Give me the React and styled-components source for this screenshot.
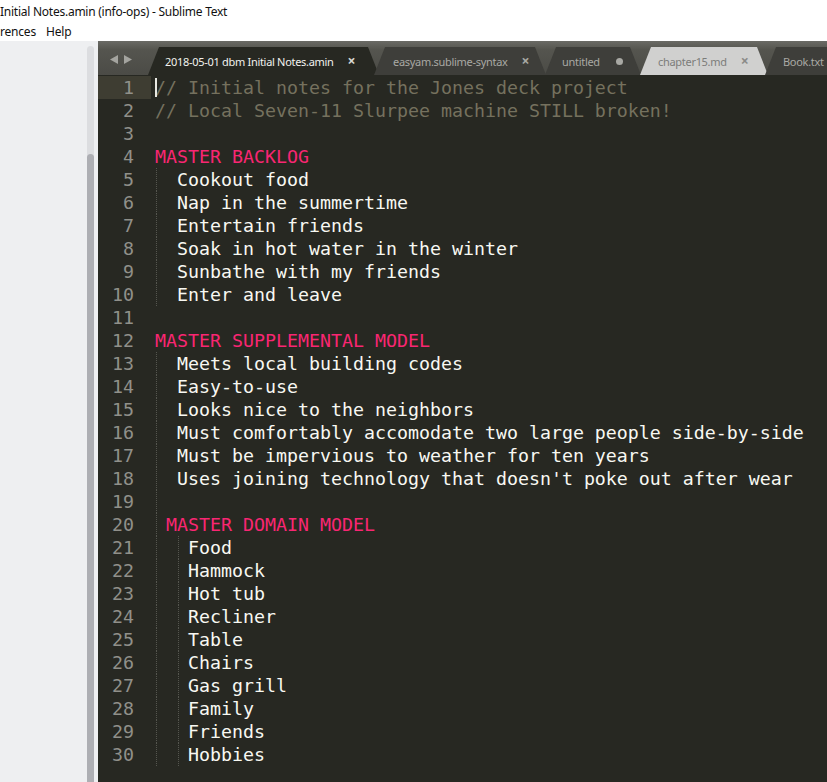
import styled, { createGlobalStyle } from 'styled-components'

const GlobalStyle = createGlobalStyle`
  html, body { margin: 0; padding: 0; background: #ffffff; overflow: hidden; }
`

const Window = styled.div`
  width: 827px;
  height: 782px;
  display: flex;
  flex-direction: column;
  overflow: hidden;
  font-family: "Noto Sans", "Open Sans", sans-serif;
`

const TitleBar = styled.div`
  height: 22px;
  display: flex;
  align-items: center;
  font-size: 12px;
  letter-spacing: -0.25px;
  color: #111;
  white-space: nowrap;
`

const MenuBar = styled.div`
  height: 19px;
  display: flex;
  align-items: center;
  gap: 10px;
  font-size: 12px;
  letter-spacing: -0.2px;
  color: #111;
`

const Body = styled.div`
  flex: 1;
  display: flex;
  min-height: 0;
`

const Sidebar = styled.div`
  width: 98px;
  flex-shrink: 0;
  background: #eeeff1;
  display: flex;
  justify-content: flex-end;
  padding: 5px 4px 0 0;
  box-sizing: border-box;
`

const Track = styled.div`
  width: 7px;
  background: #dcdde0;
  border-radius: 4px 4px 0 0;
  display: flex;
  flex-direction: column;
  padding-top: 108px;
`

const Thumb = styled.div`
  flex: 1;
  background: #adaeb3;
  border-radius: 4px 4px 0 0;
`

const Editor = styled.div`
  flex: 1;
  display: flex;
  flex-direction: column;
  background: #272822;
  min-width: 0;
`

const TabBar = styled.div`
  height: 34px;
  flex-shrink: 0;
  display: flex;
  align-items: flex-end;
  background: linear-gradient(#6a6a65, #55554f 25%, #4b4b46);
  overflow: hidden;
  white-space: nowrap;
`

const Arrows = styled.div`
  width: 50px;
  height: 34px;
  flex-shrink: 0;
  display: flex;
  align-items: center;
  gap: 6px;
  padding: 2px 0 0 12px;
  box-sizing: border-box;
`

const Arrow = styled.svg`
  width: 8px;
  height: 9px;
  fill: #a4a49f;
`

const tabColors = {
  active: { bg: '#272822', fg: '#f2f2ee', x: '#d8d8d4' },
  inactive: { bg: '#3e3e3a', fg: '#a9a9a4', x: '#a9a9a4' },
  light: { bg: '#d0d0cf', fg: '#7c7c7a', x: '#8a8a88' },
}

const Tab = styled.div`
  height: 28px;
  width: ${p => p.$w}px;
  flex-shrink: 0;
  margin-left: ${p => p.$overlap}px;
  background: ${p => tabColors[p.$kind].bg};
  color: ${p => tabColors[p.$kind].fg};
  clip-path: polygon(0 100%, 11px 0, calc(100% - 11px) 0, 100% 100%);
  display: flex;
  align-items: center;
  padding-left: ${p => p.$pad}px;
  box-sizing: border-box;
  font-size: 11px;
  letter-spacing: -0.3px;
  gap: ${p => p.$gap}px;
`

const Close = styled.span`
  color: ${p => tabColors[p.$kind].x};
  font-size: 14px;
  font-weight: 700;
  line-height: 1;
`

const Dot = styled.span`
  width: 7px;
  height: 7px;
  border-radius: 50%;
  background: #a9a9a4;
`

const Code = styled.div`
  flex: 1;
  padding-top: 1px;
  font-family: "DejaVu Sans Mono", "Liberation Mono", monospace;
  font-size: 18.27px;
`

const Line = styled.div`
  height: 23px;
  display: flex;
  align-items: center;
`

const Gutter = styled.div`
  width: 53px;
  height: 100%;
  flex-shrink: 0;
  box-sizing: border-box;
  padding-right: 17px;
  display: flex;
  align-items: center;
  justify-content: flex-end;
  color: #90908a;
  background: ${p => (p.$current ? '#3e3d32' : 'transparent')};
`

const Content = styled.div`
  position: relative;
  height: 100%;
  flex: 1;
  display: flex;
  align-items: center;
  padding-left: 4px;
  white-space: pre;
  color: ${p => ({ comment: '#75715e', heading: '#f92672', text: '#f8f8f2' }[p.$kind])};
`

const Guide = styled.span`
  position: absolute;
  top: 0;
  bottom: 0;
  left: ${p => 5 + p.$col * 11}px;
  border-left: 1px dotted #55564f;
`

const Cursor = styled.span`
  position: absolute;
  left: 4px;
  top: 2px;
  bottom: 2px;
  width: 2px;
  background: #e8e8e2;
`

const lines = [
  ['comment', '// Initial notes for the Jones deck project'],
  ['comment', '// Local Seven-11 Slurpee machine STILL broken!'],
  ['text', ''],
  ['heading', 'MASTER BACKLOG'],
  ['text', '  Cookout food', [0]],
  ['text', '  Nap in the summertime', [0]],
  ['text', '  Entertain friends', [0]],
  ['text', '  Soak in hot water in the winter', [0]],
  ['text', '  Sunbathe with my friends', [0]],
  ['text', '  Enter and leave', [0]],
  ['text', ''],
  ['heading', 'MASTER SUPPLEMENTAL MODEL'],
  ['text', '  Meets local building codes', [0]],
  ['text', '  Easy-to-use', [0]],
  ['text', '  Looks nice to the neighbors', [0]],
  ['text', '  Must comfortably accomodate two large people side-by-side', [0]],
  ['text', '  Must be impervious to weather for ten years', [0]],
  ['text', "  Uses joining technology that doesn't poke out after wear", [0]],
  ['text', '', [0]],
  ['heading', ' MASTER DOMAIN MODEL', [0]],
  ['text', '   Food', [0, 2]],
  ['text', '   Hammock', [0, 2]],
  ['text', '   Hot tub', [0, 2]],
  ['text', '   Recliner', [0, 2]],
  ['text', '   Table', [0, 2]],
  ['text', '   Chairs', [0, 2]],
  ['text', '   Gas grill', [0, 2]],
  ['text', '   Family', [0, 2]],
  ['text', '   Friends', [0, 2]],
  ['text', '   Hobbies', [0, 2]],
]

const tabs = [
  { label: '2018-05-01 dbm Initial Notes.amin', kind: 'active', w: 231, pad: 17, gap: 14, overlap: 0 },
  { label: 'easyam.sublime-syntax', kind: 'inactive', w: 172, pad: 19, gap: 14, overlap: -5 },
  { label: 'untitled', kind: 'inactive', w: 96, pad: 17, gap: 16, overlap: -1, dirty: true },
  { label: 'chapter15.md', kind: 'light', w: 128, pad: 18, gap: 14, overlap: -1 },
  { label: 'Book.txt', kind: 'inactive', w: 90, pad: 18, gap: 14, overlap: -3, noClose: true },
]

export default function App() {
  return (
    <>
      <GlobalStyle />
      <Window>
        <TitleBar>Initial Notes.amin (info-ops) - Sublime Text</TitleBar>
        <MenuBar>
          <span>rences</span>
          <span>Help</span>
        </MenuBar>
        <Body>
          <Sidebar>
            <Track>
              <Thumb />
            </Track>
          </Sidebar>
          <Editor>
            <TabBar>
              <Arrows>
                <Arrow viewBox="0 0 8 9"><path d="M8 0 L0 4.5 L8 9 Z" /></Arrow>
                <Arrow viewBox="0 0 8 9"><path d="M0 0 L8 4.5 L0 9 Z" /></Arrow>
              </Arrows>
              {tabs.map(t => (
                <Tab key={t.label} $kind={t.kind} $w={t.w} $pad={t.pad} $gap={t.gap} $overlap={t.overlap}>
                  <span>{t.label}</span>
                  {t.dirty ? <Dot /> : !t.noClose && <Close $kind={t.kind}>×</Close>}
                </Tab>
              ))}
            </TabBar>
            <Code>
              {lines.map(([kind, text, guides], i) => (
                <Line key={i}>
                  <Gutter $current={i === 0}>{i + 1}</Gutter>
                  <Content $kind={kind}>
                    {(guides || []).map(c => <Guide key={c} $col={c} />)}
                    {i === 0 && <Cursor />}
                    {text}
                  </Content>
                </Line>
              ))}
            </Code>
          </Editor>
        </Body>
      </Window>
    </>
  )
}
